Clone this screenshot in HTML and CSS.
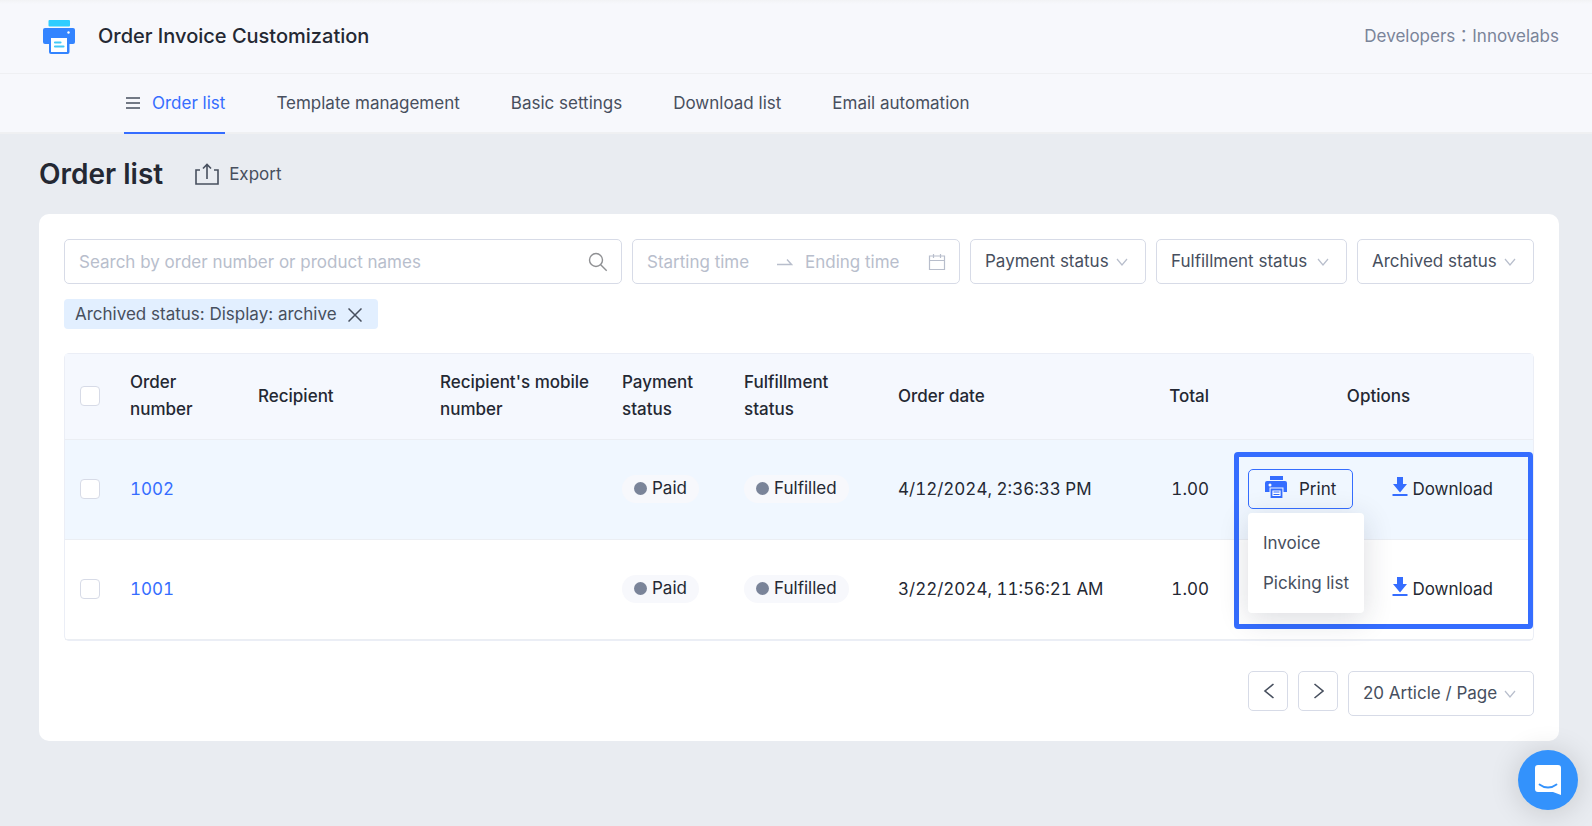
FILE: index.html
```html
<!DOCTYPE html>
<html lang="en">
<head>
    <meta charset="UTF-8">
    <meta name="viewport" content="width=device-width, initial-scale=1.0">
    <title>Order Invoice Customization</title>
    <link rel="stylesheet" href="styles.css">
</head>
<body>
    <!-- Icons used more than once -->
    <svg class="sprite" aria-hidden="true">
        <symbol id="chevron" viewBox="0 0 12 12">
            <path d="M1 3l5 6 5-6" fill="none" stroke="currentColor" stroke-width="1.2"/>
        </symbol>
        <symbol id="printer" viewBox="0 0 22 22">
            <path d="M5 0h13v4H5z" fill="currentColor"/>
            <path d="M2 5h18a2 2 0 0 1 2 2v9h-4v-4H5v4H0V7a2 2 0 0 1 2-2z" fill="currentColor"/>
            <circle cx="5" cy="9" r="1.5" fill="#fff"/>
            <path d="M4.500 11.500h14v5h-14z" fill="#f0f7ff"/>
            <path d="M6.500 13.500h10v7.500h-10z" fill="#fff" stroke="currentColor" stroke-width="1.800"/>
            <path d="M8.500 16h6M8.500 18.500h6" stroke="currentColor" stroke-width="1.200"/>
        </symbol>
        <symbol id="download" viewBox="0 0 16 20">
            <path d="M5 0h6v7h4l-7 8.500L1 7h4z" fill="currentColor"/>
            <path d="M.5 18h15" stroke="currentColor" stroke-width="2"/>
        </symbol>
    </svg>

    <header class="header">
        <div class="brand">
            <svg class="logo" viewBox="0 0 33 34" aria-hidden="true">
                <rect x="5.500" y="0" width="21.500" height="6.500" rx="1" fill="#2fcdff"/>
                <rect x="0" y="8" width="32" height="16" rx="2" fill="#3384ff"/>
                <rect x="6" y="17" width="20.500" height="17" rx="2" fill="#3384ff"/>
                <path d="M8 18h16v14H8z" fill="#fff"/>
                <circle cx="25.500" cy="12.500" r="1.200" fill="#fff"/>
                <path d="M12 22.500h5.500M12 26.500h8.500" stroke="#43c9f7" stroke-width="2.200" stroke-linecap="round"/>
            </svg>
            <span class="brand-name">Order Invoice Customization</span>
        </div>
        <span class="developers">Developers：Innovelabs</span>
    </header>

    <nav class="nav">
        <a href="#" class="active">
            <svg width="16" height="12" viewBox="0 0 16 12" aria-hidden="true"><path d="M2 1h14M2 6h14M2 11h14" stroke="#474f5e" stroke-width="1.500"/></svg>
            Order list
        </a>
        <a href="#">Template management</a>
        <a href="#">Basic settings</a>
        <a href="#">Download list</a>
        <a href="#">Email automation</a>
    </nav>

    <main class="main">
        <div class="page-head">
            <h1>Order list</h1>
            <button type="button" class="export">
                <svg width="24" height="22" viewBox="0 0 24 22" fill="none" stroke="currentColor" stroke-width="1.600" aria-hidden="true">
                    <path d="M5 7H1v14h22V7h-4M12 16V1.500M8 5.500l4-4 4 4"/>
                </svg>
                Export
            </button>
        </div>

        <section class="card">
            <!-- Filters -->
            <div class="filters">
                <div class="field search">
                    <input type="text" placeholder="Search by order number or product names" aria-label="Search orders">
                    <svg width="20" height="20" viewBox="0 0 20 20" fill="none" stroke="#8f9093" stroke-width="1.400" aria-hidden="true">
                        <circle cx="8" cy="8" r="6.500"/>
                        <path d="M12.700 12.700l6 6"/>
                    </svg>
                </div>
                <div class="field dates">
                    <input type="text" placeholder="Starting time" aria-label="Starting time">
                    <svg width="16" height="8" viewBox="0 0 16 8" fill="none" stroke="currentColor" stroke-width="1.400" aria-hidden="true"><path d="M0 6.500h14.500L10 1.500"/></svg>
                    <input type="text" placeholder="Ending time" aria-label="Ending time">
                    <svg width="18" height="18" viewBox="0 0 18 18" fill="none" stroke="currentColor" stroke-width="1.200" aria-hidden="true"><path d="M1.500 3h15v13.500h-15zM1.500 7.500h15M5.500 1v4M12.500 1v4"/></svg>
                </div>
                <div class="select payment">
                    <select aria-label="Payment status"><option>Payment status</option></select>
                    <svg class="chevron"><use href="#chevron"/></svg>
                </div>
                <div class="select fulfillment">
                    <select aria-label="Fulfillment status"><option>Fulfillment status</option></select>
                    <svg class="chevron"><use href="#chevron"/></svg>
                </div>
                <div class="select archived">
                    <select aria-label="Archived status"><option>Archived status</option></select>
                    <svg class="chevron"><use href="#chevron"/></svg>
                </div>
            </div>

            <div class="tag">
                Archived status: Display: archive
                <button type="button" aria-label="Remove filter">
                    <svg width="14" height="14" viewBox="0 0 14 14" stroke="currentColor" stroke-width="1.500" aria-hidden="true"><path d="M.5.5l13 13M13.500.5l-13 13"/></svg>
                </button>
            </div>

            <!-- Orders -->
            <div class="table-wrap">
                <table>
                    <colgroup>
                        <col class="col-check">
                        <col class="col-number">
                        <col class="col-recipient">
                        <col class="col-mobile">
                        <col class="col-payment">
                        <col class="col-fulfillment">
                        <col class="col-date">
                        <col class="col-total">
                        <col class="col-options">
                    </colgroup>
                    <thead>
                        <tr>
                            <th><input type="checkbox" aria-label="Select all orders"></th>
                            <th>Order number</th>
                            <th>Recipient</th>
                            <th>Recipient's mobile number</th>
                            <th>Payment status</th>
                            <th>Fulfillment status</th>
                            <th>Order date</th>
                            <th class="total">Total</th>
                            <th class="options-head">Options</th>
                        </tr>
                    </thead>
                    <tbody>
                        <tr class="hovered">
                            <td><input type="checkbox" aria-label="Select order 1002"></td>
                            <td><a href="#">1002</a></td>
                            <td></td>
                            <td></td>
                            <td><span class="badge">Paid</span></td>
                            <td><span class="badge">Fulfilled</span></td>
                            <td>4/12/2024, 2:36:33 PM</td>
                            <td class="total">1.00</td>
                            <td>
                                <div class="options">
                                    <div class="dropdown">
                                        <button type="button" class="print"><svg width="22" height="22"><use href="#printer"/></svg>Print</button>
                                        <div class="menu">
                                            <a href="#">Invoice</a>
                                            <a href="#">Picking list</a>
                                        </div>
                                    </div>
                                    <button type="button" class="download"><svg width="16" height="20"><use href="#download"/></svg>Download</button>
                                </div>
                            </td>
                        </tr>
                        <tr>
                            <td><input type="checkbox" aria-label="Select order 1001"></td>
                            <td><a href="#">1001</a></td>
                            <td></td>
                            <td></td>
                            <td><span class="badge">Paid</span></td>
                            <td><span class="badge">Fulfilled</span></td>
                            <td>3/22/2024, 11:56:21 AM</td>
                            <td class="total">1.00</td>
                            <td>
                                <div class="options end">
                                    <button type="button" class="download"><svg width="16" height="20"><use href="#download"/></svg>Download</button>
                                </div>
                            </td>
                        </tr>
                    </tbody>
                </table>
                <div class="highlight"></div>
            </div>

            <div class="pagination">
                <button type="button" aria-label="Previous page"><svg width="12" height="16" viewBox="0 0 12 16" fill="none" stroke="currentColor" stroke-width="1.600" aria-hidden="true"><path d="M11.500 1L3 8l8.500 7"/></svg></button>
                <button type="button" aria-label="Next page"><svg width="12" height="16" viewBox="0 0 12 16" fill="none" stroke="currentColor" stroke-width="1.600" aria-hidden="true"><path d="M2.500 1L11 8l-8.500 7"/></svg></button>
                <div class="select per-page">
                    <select aria-label="Orders per page"><option>20 Article / Page</option></select>
                    <svg class="chevron"><use href="#chevron"/></svg>
                </div>
            </div>
        </section>
    </main>

    <button type="button" class="chat" aria-label="Open chat">
        <svg width="28" height="32" viewBox="0 0 28 32" aria-hidden="true">
            <path d="M4 1h20a3 3 0 0 1 3 3v27l-8-3H4a3 3 0 0 1-3-3V4a3 3 0 0 1 3-3z" fill="#fff"/>
            <path d="M5.500 20.500c5 4 12 4 17 0" fill="none" stroke="#3392fc" stroke-width="1.800" stroke-linecap="round"/>
        </svg>
    </button>
</body>
</html>
```
FILE: styles.css
```css
/* Global styles */
* {
    box-sizing: border-box;
}
body {
    margin: 0;
    min-height: 100vh;
    background: #e9ecf1;
    color: #474f5e;
    font-family: Inter, "Noto Sans CJK TC", sans-serif;
    font-size: 17px;
    line-height: 27px;
}
button, input, select {
    font: inherit;
    color: inherit;
}
button {
    display: flex;
    align-items: center;
    padding: 0;
    border: none;
    background: none;
    cursor: pointer;
}
a {
    color: inherit;
    text-decoration: none;
}
svg {
    flex: none;
}
.sprite {
    display: none;
}

/* Header styles */
.header {
    display: flex;
    justify-content: space-between;
    align-items: center;
    height: 74px;
    padding: 0 33px 0 43px;
    background: linear-gradient(#f2f3f5, #f7f8fc 4px);
    border-bottom: 1px solid #eff0f3;
}
.brand {
    display: flex;
    align-items: center;
    gap: 22px;
}
.logo {
    width: 33px;
    height: 34px;
}
.brand-name {
    font-size: 20px;
    font-weight: 500;
    color: #242833;
}
.developers {
    color: #7a8499;
}

/* Navigation styles */
.nav {
    display: flex;
    gap: 51px;
    height: 60px;
    padding-left: 124px;
    background: #f7f8fc;
    border-bottom: 2px solid #eff0f2;
}
.nav a {
    display: flex;
    align-items: center;
    gap: 12px;
    height: 60px;
    border-bottom: 2px solid transparent;
}
.nav .active {
    color: #356dff;
    border-color: #356dff;
}

/* Page heading */
.main {
    padding: 20px 33px 0 39px;
}
.page-head {
    display: flex;
    align-items: center;
    gap: 32px;
    height: 40px;
    margin-bottom: 20px;
}
.page-head h1 {
    margin: 0;
    font-size: 28px;
    font-weight: 600;
    color: #242833;
}
.export {
    gap: 10px;
}

/* Card */
.card {
    padding: 25px;
    background: #fff;
    border-radius: 10px;
}

/* Filters */
.filters {
    display: flex;
    gap: 10px;
}
.field {
    display: flex;
    align-items: center;
    height: 45px;
    padding: 0 13px 0 14px;
    border: 1px solid #d7dbe7;
    border-radius: 5px;
    color: #b8becc;
}
.field input {
    min-width: 0;
    padding: 1px 0 0;
    border: none;
    outline: none;
    background: none;
    color: #474f5e;
}
.field input::placeholder {
    color: #b8becc;
    opacity: 1;
}
.search {
    flex: 1;
}
.search input {
    flex: 1;
}
.dates {
    width: 328px;
}
.dates input {
    flex: 0 1 130px;
}
.dates input:last-of-type {
    flex: 1;
}
.dates input + svg {
    margin-right: 12px;
}
.dates svg:last-child {
    margin-right: 0;
}
.select {
    position: relative;
    height: 45px;
}
.select select {
    width: 100%;
    height: 100%;
    padding: 0 14px;
    border: 1px solid #d7dbe7;
    border-radius: 5px;
    background: #fff;
    appearance: none;
}
.select .chevron {
    position: absolute;
    top: 17px;
    right: 18px;
    width: 12px;
    height: 12px;
    color: #b8becc;
    pointer-events: none;
}
.payment {
    width: 176px;
}
.fulfillment {
    width: 191px;
}
.archived {
    width: 177px;
}
.tag {
    display: inline-flex;
    align-items: center;
    gap: 11px;
    height: 30px;
    margin-top: 15px;
    padding: 1px 16px 0 11px;
    background: #e2efff;
    border-radius: 4px;
}

/* Table */
.table-wrap {
    position: relative;
    margin-top: 24px;
    border: 1px solid #ebeef6;
    border-radius: 5px;
}
table {
    width: 100%;
    table-layout: fixed;
    border-collapse: separate;
    border-spacing: 0;
    color: #242833;
    font-variant-numeric: tabular-nums;
}
th, td {
    padding: 0 15px 1px;
    border-bottom: 1px solid #ebeef3;
    text-align: left;
}
th {
    height: 86px;
    background: #f5f8fe;
    font-weight: 500;
}
td {
    height: 100px;
}
td a {
    color: #356dff;
}
th.total, td.total {
    text-align: right;
}
th.options-head {
    text-align: center;
}
.hovered td {
    background: #f0f7ff;
}
.col-check {
    width: 50px;
}
.col-number {
    width: 128px;
}
.col-recipient, .col-mobile {
    width: 182px;
}
.col-payment {
    width: 122px;
}
.col-fulfillment {
    width: 154px;
}
.col-total {
    width: 92px;
}
.col-options {
    width: 309px;
}
input[type="checkbox"] {
    display: block;
    width: 20px;
    height: 20px;
    margin: 0;
    border: 1px solid #d7dbe7;
    border-radius: 4px;
    background: #fff;
    appearance: none;
}
.badge {
    display: inline-flex;
    align-items: center;
    gap: 5px;
    height: 28px;
    padding: 0 12px;
    background: #f7f8fc;
    border-radius: 14px;
}
.badge::before {
    content: '';
    width: 13px;
    height: 13px;
    background: #7a8499;
    border-radius: 50%;
}
.options {
    display: flex;
    justify-content: space-between;
    align-items: center;
    padding: 0 25px 0 9px;
}
.options.end {
    justify-content: flex-end;
}
.print {
    gap: 12px;
    height: 40px;
    padding: 0 16px;
    border: 1px solid #356dff;
    border-radius: 5px;
}
.print svg, .download svg {
    margin-bottom: 4px;
    color: #356dff;
}
.download {
    gap: 4px;
}

/* Print menu */
.dropdown {
    position: relative;
}
.menu {
    position: absolute;
    top: 44px;
    left: 0;
    z-index: 2;
    padding: 10px 0;
    background: #fff;
    border-radius: 4px;
    box-shadow: 0 6px 30px rgba(30, 40, 60, 0.16);
    white-space: nowrap;
    line-height: 40px;
}
.menu a {
    display: block;
    padding: 0 15px;
    color: #474f5e;
}

/* Frame around the print and download actions */
.highlight {
    position: absolute;
    top: 98px;
    right: 0;
    bottom: 11px;
    width: 299px;
    border: 5px solid #356dff;
    border-radius: 4px;
    pointer-events: none;
}

/* Pagination */
.pagination {
    display: flex;
    justify-content: flex-end;
    gap: 10px;
    margin-top: 30px;
}
.pagination button {
    justify-content: center;
    width: 40px;
    height: 40px;
    border: 1px solid #d7dbe7;
    border-radius: 5px;
}
.per-page {
    width: 186px;
}

/* Chat button */
.chat {
    position: fixed;
    right: 14px;
    bottom: 16px;
    justify-content: center;
    width: 60px;
    height: 60px;
    background: #3392fc;
    border-radius: 50%;
    box-shadow: 0 2px 30px rgba(0, 0, 0, 0.16);
}
```
